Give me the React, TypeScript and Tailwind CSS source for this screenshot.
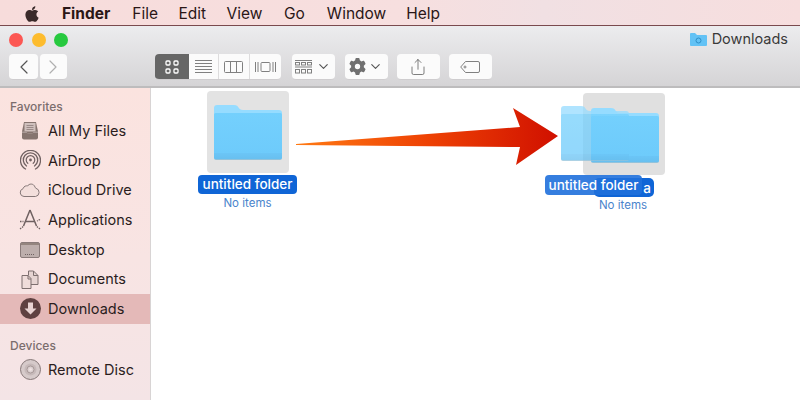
import { FaApple, FaGear } from "react-icons/fa6";
import { ChevronDown, ChevronLeft, ChevronRight, Share } from "lucide-react";
import type { ReactNode } from "react";

const menuItems = [
  { label: "File", className: "ml-[22px]" },
  { label: "Edit", className: "ml-[20.500px]" },
  { label: "View", className: "ml-[20.500px]" },
  { label: "Go", className: "ml-[21.500px]" },
  { label: "Window", className: "ml-[22px]" },
  { label: "Help", className: "ml-[20px]" },
];

const iconColor = "#6f6161";

function FolderShape({ id }: { id: string }) {
  return (
    <svg width="68" height="55" viewBox="0 0 68 55" className="block">
      <defs>
        <linearGradient id={id} x1="0" y1="0" x2="0" y2="1">
          <stop offset="0" stopColor="#74d0fd" />
          <stop offset="0.85" stopColor="#6ecbfb" />
          <stop offset="0.86" stopColor="#6bc5f6" />
          <stop offset="0.97" stopColor="#68c0f0" />
          <stop offset="1" stopColor="#a9c4d0" />
        </linearGradient>
      </defs>
      <path d="M0 3a3 3 0 0 1 3-3h17c3 0 3.500 1.200 4.500 2.500s2 2.500 4.500 2.500h36a3 3 0 0 1 3 3v4H0z" fill="#96dcff" />
      <path d="M0 9.500A1.500 1.500 0 0 1 1.500 8h65A1.500 1.500 0 0 1 68 9.500V53a2 2 0 0 1-2 2H2a2 2 0 0 1-2-2z" fill={`url(#${id})`} />
    </svg>
  );
}

function IconGridView() {
  return (
    <svg width="14" height="14" viewBox="0 0 14 14" fill="none" stroke="#fff" strokeWidth="1.300">
      <rect x="1" y="1" width="4" height="4" rx="1" />
      <rect x="9" y="1" width="4" height="4" rx="1" />
      <rect x="1" y="9" width="4" height="4" rx="1" />
      <rect x="9" y="9" width="4" height="4" rx="1" />
    </svg>
  );
}

function IconListView() {
  return (
    <svg width="17" height="13" viewBox="0 0 17 13" stroke="#808080" strokeWidth="1">
      <path d="M0 .5h17M0 3.500h17M0 6.500h17M0 9.500h17M0 12.500h17" />
    </svg>
  );
}

function IconColumnView() {
  return (
    <svg width="19" height="12" viewBox="0 0 19 12" fill="none" stroke="#808080" strokeWidth="1">
      <rect x=".5" y=".5" width="18" height="11" rx="1" />
      <path d="M6.500 0v12M12.500 0v12" />
    </svg>
  );
}

function IconCoverView() {
  return (
    <svg width="21" height="12" viewBox="0 0 21 12" fill="none" stroke="#808080" strokeWidth="1">
      <rect x="6" y="1.500" width="9" height="9" rx="1" />
      <path d="M.5 1v10M3 1v10M18 1v10M20.500 1v10" />
    </svg>
  );
}

function IconArrange() {
  return (
    <svg width="17" height="14" viewBox="0 0 17 14" fill="none" stroke="#808080" strokeWidth="1">
      <path d="M0 .5h17" />
      <rect x=".5" y="2.500" width="4" height="2.500" />
      <rect x="6.500" y="2.500" width="4" height="2.500" />
      <rect x="12.500" y="2.500" width="4" height="2.500" />
      <path d="M0 7h17" />
      <rect x=".5" y="9.500" width="4" height="3.500" />
      <rect x="6.500" y="9.500" width="4" height="3.500" />
      <rect x="12.500" y="9.500" width="4" height="3.500" />
    </svg>
  );
}

function IconTag() {
  return (
    <svg width="20" height="12" viewBox="0 0 20 12" fill="none" stroke="#808080" strokeWidth="1">
      <path d="M5.500.5H18a1.500 1.500 0 0 1 1.500 1.500v8a1.500 1.500 0 0 1-1.500 1.500H5.500L.7 6z" />
      <circle cx="5" cy="6" r="1" />
    </svg>
  );
}

function IconAllFiles() {
  return (
    <svg width="18" height="19" viewBox="0 0 18 19">
      <path d="M3 1h12l2 9.500v6a2 2 0 0 1-2 2H3a2 2 0 0 1-2-2v-6z" fill="#86746f" />
      <rect x="3.500" y="2" width="11" height="8.500" fill="#cfc0bd" />
      <path d="M5.500 4.500h7M5.500 6.500h7M5.500 8.500h7" stroke="#9a8a88" strokeWidth="1" />
      <path d="M1 10.500h4.500l1 2h5l1-2H17v1.500H1z" fill="#a99996" />
    </svg>
  );
}

function IconAirDrop() {
  return (
    <svg width="21" height="21" viewBox="0 0 21 21" fill="none" stroke={iconColor} strokeLinecap="round">
      <path d="M5.500 19a10 10 0 1 1 10 0" strokeWidth="1.300" />
      <path d="M6.500 16a7.200 7.200 0 1 1 8 0" strokeWidth="1.300" />
      <path d="M7.800 13.300a4.300 4.300 0 1 1 5.400 0" strokeWidth="1.200" />
      <circle cx="10.500" cy="10" r="1.400" fill={iconColor} stroke="none" />
    </svg>
  );
}

function IconCloud() {
  return (
    <svg width="22" height="14" viewBox="0 0 22 14" fill="#f3dfdc" stroke="#867878" strokeWidth="1">
      <path d="M5 13.500a4 4 0 0 1-1-7.800C5 3 7 2.500 8.500 3c1.500-2.500 6-3 7.500 1 0 .5.500 1 1 1.300a4.200 4.200 0 0 1-.5 8.200z" />
    </svg>
  );
}

function IconApplications() {
  return (
    <svg width="22" height="21" viewBox="0 0 22 21" fill="none" stroke={iconColor}>
      <path d="M11 1L4.500 17M11 1l6.500 16" strokeWidth="1.500" />
      <path d="M6 12.500h10" strokeWidth="1.500" />
      <path d="M1 20l4-3M21 20l-4-3M1 12.500h3.500M21 10.500l-3 1.500" strokeWidth="1.300" strokeDasharray="1.500 1" />
    </svg>
  );
}

function IconDesktop() {
  return (
    <svg width="20" height="16" viewBox="0 0 20 16">
      <rect x=".5" y=".5" width="19" height="15" rx="1.500" fill="#bdaeac" stroke="#8a7b7a" />
      <rect x="1" y="1" width="18" height="2" fill="#94857f" />
      <path d="M5 12.500h10" stroke="#6f6161" strokeWidth="1" strokeDasharray="1 1" />
    </svg>
  );
}

function IconDocuments() {
  return (
    <svg width="18" height="19" viewBox="0 0 18 19" fill="none" stroke="#7d6f6f">
      <path d="M7.500 5.500V1h5l4.500 4.500v9h-7" fill="#e6d4d2" />
      <path d="M1 5.500h6l3 3v10H1z" fill="#efdcda" />
      <path d="M12.500 1v4.500H17M7 5.500V9h3" />
    </svg>
  );
}

function IconDownloads() {
  return (
    <svg width="21" height="21" viewBox="0 0 21 21">
      <circle cx="10.500" cy="10.500" r="10.500" fill="#5f4141" />
      <path d="M8 4.500h5v6h3.500l-6 6-6-6H8z" fill="#e8d3d2" />
    </svg>
  );
}

function IconDisc() {
  return (
    <svg width="21" height="21" viewBox="0 0 21 21">
      <circle cx="10.500" cy="10.500" r="10" fill="#d6caca" stroke="#857777" />
      <circle cx="10.500" cy="10.500" r="6" fill="#c6b9b9" />
      <circle cx="10.500" cy="10.500" r="3.500" fill="#dcd1d1" stroke="#9a8c8c" strokeWidth=".8" />
      <circle cx="10.500" cy="10.500" r="1.300" fill="#f2e4e4" />
    </svg>
  );
}

function SidebarRow({ icon, label, selected }: { icon: ReactNode; label: string; selected?: boolean }) {
  return (
    <div className={`flex h-[29.700px] items-center ${selected ? "bg-[#e4b9b8]" : ""}`}>
      <div className="flex w-[48px] shrink-0 justify-end pr-[6px]">
        <div className="flex w-[24px] justify-center">{icon}</div>
      </div>
      <span className="text-[14.500px] text-[#2a1d1d]">{label}</span>
    </div>
  );
}

function ToolButton({ className, children }: { className: string; children: ReactNode }) {
  return (
    <div className={`flex h-[26px] items-center justify-center rounded-[4px] border-b border-[#cfcdcf] bg-[#fbfbfb] ${className}`}>
      {children}
    </div>
  );
}

export default function App() {
  return (
    <div className="flex h-[400px] w-[800px] flex-col overflow-hidden bg-white font-['Inter',sans-serif]">
      <div className="flex h-[25px] shrink-0 items-center bg-[linear-gradient(90deg,#f7dcdb,#f7dfdf_50%,#f1e0e3_68%,#f7dede)] pl-[23px] pt-[2px] text-[15.500px] text-[#2a1616]">
        <FaApple className="mr-[21px] text-[18px] text-[#3a2a2a]" />
        <span className="font-bold">Finder</span>
        {menuItems.map((item) => (
          <span key={item.label} className={item.className}>
            {item.label}
          </span>
        ))}
      </div>
      <div className="h-px shrink-0 bg-[#7a4a4e]" />

      <div className="flex h-[62px] shrink-0 flex-col border-b-2 border-[#bdbcbd] bg-[linear-gradient(180deg,#ececee,#d5d4d6)] px-[9px]">
        <div className="flex h-[28px] items-center justify-between">
          <div className="flex items-center gap-[8.500px]">
            <span className="h-[14px] w-[14px] rounded-full bg-[#fc5753]" />
            <span className="h-[14px] w-[14px] rounded-full bg-[#fdbc2e]" />
            <span className="h-[14px] w-[14px] rounded-full bg-[#27c93f]" />
          </div>
          <div className="flex items-center gap-[5px] pb-[2px] pr-[3px]">
            <svg width="17" height="14" viewBox="0 0 17 14">
              <path d="M0 2a1 1 0 0 1 1-1h4l2 2h9a1 1 0 0 1 1 1v9a1 1 0 0 1-1 1H1a1 1 0 0 1-1-1z" fill="#62c2f5" />
              <circle cx="8.500" cy="8.500" r="2.500" fill="none" stroke="#2f8fc8" strokeWidth="1" />
            </svg>
            <span className="text-[14.500px] text-[#3a3a3a]">Downloads</span>
          </div>
        </div>
        <div className="flex items-center">
          <ToolButton className="w-[29px]">
            <ChevronLeft size={24} strokeWidth={1.200} color="#555" />
          </ToolButton>
          <ToolButton className="ml-[1.500px] w-[27px]">
            <ChevronRight size={24} strokeWidth={1.200} color="#b0b0b0" />
          </ToolButton>
          <div className="ml-[88px] flex h-[26px] w-[126px] overflow-hidden rounded-[4px] border-b border-[#cfcdcf] bg-[#fbfbfb]">
            <div className="flex w-[34px] items-center justify-center bg-[#666666]">
              <IconGridView />
            </div>
            <div className="flex w-[30px] items-center justify-center border-r border-[#dddcdd]">
              <IconListView />
            </div>
            <div className="flex w-[31px] items-center justify-center border-r border-[#dddcdd]">
              <IconColumnView />
            </div>
            <div className="flex w-[31px] items-center justify-center">
              <IconCoverView />
            </div>
          </div>
          <ToolButton className="ml-[11px] w-[43px] gap-[4px]">
            <IconArrange />
            <ChevronDown size={15} strokeWidth={1.800} color="#555" />
          </ToolButton>
          <ToolButton className="ml-[10px] w-[43px] gap-[2px]">
            <FaGear size={17} color="#707070" />
            <ChevronDown size={15} strokeWidth={1.800} color="#555" />
          </ToolButton>
          <ToolButton className="ml-[9px] w-[43px]">
            <Share size={18} strokeWidth={1} color="#555" />
          </ToolButton>
          <ToolButton className="ml-[9px] w-[43px]">
            <IconTag />
          </ToolButton>
        </div>
      </div>

      <div className="flex min-h-0 flex-1">
        <div className="w-[151px] shrink-0 border-r border-[#d8d4d4] bg-[linear-gradient(180deg,#fbe3df,#f8e4e3_55%,#f4e4e6)] pt-[10px]">
          <div className="h-[18px] pl-[10px] text-[12px] font-medium leading-[18px] text-[#7b6d6d]">Favorites</div>
          <SidebarRow icon={<IconAllFiles />} label="All My Files" />
          <SidebarRow icon={<IconAirDrop />} label="AirDrop" />
          <SidebarRow icon={<IconCloud />} label="iCloud Drive" />
          <SidebarRow icon={<IconApplications />} label="Applications" />
          <SidebarRow icon={<IconDesktop />} label="Desktop" />
          <SidebarRow icon={<IconDocuments />} label="Documents" />
          <SidebarRow icon={<IconDownloads />} label="Downloads" selected />
          <div className="mt-[13px] h-[18px] pl-[10px] text-[12px] font-medium leading-[18px] text-[#7b6d6d]">Devices</div>
          <SidebarRow icon={<IconDisc />} label="Remote Disc" />
        </div>

        <div className="relative flex-1 bg-white">
          <div className="absolute left-[56px] top-[3px] h-[82px] w-[82px] rounded-[4px] bg-[#e3e3e3]" />
          <div className="absolute left-[63px] top-[17px]">
            <FolderShape id="folderA" />
          </div>
          <div className="absolute left-[47px] top-[87px] flex h-[19px] w-[99px] items-center justify-center rounded-[4px] bg-[#0f65d6] text-[13.500px] font-medium text-white">
            untitled folder
          </div>
          <div className="absolute left-[47px] top-[107px] w-[99px] text-center text-[11.500px] leading-[16px] text-[#4a84cc]">No items</div>

          <svg className="absolute left-[144px] top-[18px]" width="266" height="62" viewBox="0 0 266 62">
            <defs>
              <linearGradient id="arrowFill" x1="0" y1="0" x2="1" y2="0">
                <stop offset="0" stopColor="#ff7a14" />
                <stop offset="0.5" stopColor="#ee4204" />
                <stop offset="1" stopColor="#d01000" />
              </linearGradient>
            </defs>
            <path d="M1 38L225 21 L218 2 L263 30 L221 59 L225 41L1 39z" fill="url(#arrowFill)" />
          </svg>

          <div className="absolute left-[432px] top-[5px] h-[82px] w-[82px] rounded-[4px] bg-[#e0e0e0]" />
          <div className="absolute left-[439.500px] top-[20px]">
            <FolderShape id="folderC" />
          </div>
          <div className="absolute left-[410px] top-[18px] opacity-75">
            <FolderShape id="folderB" />
          </div>
          <div className="absolute left-[443px] top-[90px] h-[19px] w-[60px] rounded-[5px] bg-[#0f65d6] pr-[3px] text-right text-[13.500px] font-medium leading-[20px] text-white">
            a
          </div>
          <div className="absolute left-[394px] top-[87px] flex h-[20px] w-[97px] items-center justify-center rounded-[4px] bg-[#1f70dc]/90 text-[13.500px] font-medium text-white">
            untitled folder
          </div>
          <div className="absolute left-[424px] top-[109px] w-[96px] text-center text-[11.500px] leading-[16px] text-[#4a84cc]">No items</div>
        </div>
      </div>
    </div>
  );
}
